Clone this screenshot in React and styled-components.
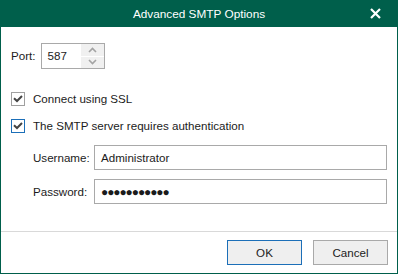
import React from 'react'
import styled, { createGlobalStyle } from 'styled-components'

const Global = createGlobalStyle`
  html, body { margin: 0; padding: 0; background: #fff; }
  body { font-family: "Liberation Sans", Arial, sans-serif; }
`

const Window = styled.div`
  width: 398px;
  height: 274px;
  box-sizing: border-box;
  border: 1px solid #005f4b;
  border-top: none;
  display: flex;
  flex-direction: column;
  background: #fff;
  color: #1b1b1b;
  font-size: 11.6px;
  line-height: 16px;
`
const TitleBar = styled.div`
  height: 27px;
  background: #005f4b;
  color: #fff;
  display: flex;
  align-items: center;
  justify-content: center;
  position: relative;
  font-size: 11.8px;
  margin: 0 -1px;
`
const Close = styled.div`
  position: absolute;
  right: 17px;
  top: 8px;
  width: 11px;
  height: 11px;
  display: flex;
`
const Body = styled.div`
  flex: 1;
  padding: 16px 10px 0 10px;
  display: flex;
  flex-direction: column;
`
const PortRow = styled.div`
  display: flex;
  align-items: center;
  gap: 6px;
`
const Spinner = styled.div`
  width: 64px;
  height: 26px;
  box-sizing: border-box;
  border: 1px solid #a9a9a9;
  display: flex;
`
const SpinValue = styled.div`
  flex: 1;
  padding-left: 5px;
  display: flex;
  align-items: center;
`
const SpinButtons = styled.div`
  width: 23px;
  display: flex;
  flex-direction: column;
  background: #f0f0f0;
`
const SpinBtn = styled.div`
  flex: 1;
  display: flex;
  align-items: center;
  justify-content: center;
  border-top: ${p => (p.$bottom ? '1px solid #fff' : 'none')};
`
const CheckRow = styled.label`
  display: flex;
  align-items: center;
  gap: 8px;
  height: 16px;
  margin-top: ${p => p.$mt}px;
`
const Box = styled.span`
  width: 14px;
  height: 14px;
  box-sizing: border-box;
  border: 1px solid ${p => (p.$focus ? '#1c6fb8' : '#a0a0a0')};
  display: flex;
  align-items: center;
  justify-content: center;
  background: #fff;
`
const Fields = styled.div`
  display: grid;
  grid-template-columns: 61px 1fr;
  row-gap: 9px;
  align-items: center;
  padding-left: 22px;
  margin-top: 11px;
`
const Input = styled.div`
  height: 25px;
  box-sizing: border-box;
  border: 1px solid #a9a9a9;
  padding-left: 6px;
  display: flex;
  align-items: center;
  font-size: ${p => (p.$dots ? '12px' : 'inherit')};
  letter-spacing: ${p => (p.$dots ? '-1.1px' : '0')};
`
const Footer = styled.div`
  border-top: 1px solid #d9d9d9;
  height: 41px;
  display: flex;
  justify-content: flex-end;
  align-items: center;
  gap: 11px;
  padding: 0 9px 0 0;
`
const Button = styled.div`
  width: 75px;
  height: 25px;
  box-sizing: border-box;
  background: #efefef;
  border: 1px solid ${p => (p.$primary ? '#1c6fb8' : '#a9a9a9')};
  display: flex;
  align-items: center;
  justify-content: center;
`

const Check = () => (
  <svg width="10" height="8" viewBox="0 0 10 8">
    <path d="M1 3.2 L4 6 L9 1" fill="none" stroke="#444" strokeWidth="2" />
  </svg>
)

const Chevron = ({ up }) => (
  <svg width="9" height="6" viewBox="0 0 9 6">
    <path d={up ? 'M1 5 L4.5 1.5 L8 5' : 'M1 1 L4.5 4.5 L8 1'} fill="none" stroke="#a3a3a3" strokeWidth="1.6" />
  </svg>
)

export default function App() {
  return (
    <>
      <Global />
      <Window>
        <TitleBar>
          Advanced SMTP Options
          <Close>
            <svg width="11" height="11" viewBox="0 0 11 11">
              <path d="M1 1 L10 10 M10 1 L1 10" stroke="#fff" strokeWidth="2.2" />
            </svg>
          </Close>
        </TitleBar>
        <Body>
          <PortRow>
            <span>Port:</span>
            <Spinner>
              <SpinValue>587</SpinValue>
              <SpinButtons>
                <SpinBtn><Chevron up /></SpinBtn>
                <SpinBtn $bottom><Chevron /></SpinBtn>
              </SpinButtons>
            </Spinner>
          </PortRow>
          <CheckRow $mt={22}>
            <Box><Check /></Box>
            Connect using SSL
          </CheckRow>
          <CheckRow $mt={11}>
            <Box $focus><Check /></Box>
            The SMTP server requires authentication
          </CheckRow>
          <Fields>
            <span>Username:</span>
            <Input>Administrator</Input>
            <span>Password:</span>
            <Input $dots>●●●●●●●●●●●</Input>
          </Fields>
        </Body>
        <Footer>
          <Button $primary>OK</Button>
          <Button>Cancel</Button>
        </Footer>
      </Window>
    </>
  )
}
